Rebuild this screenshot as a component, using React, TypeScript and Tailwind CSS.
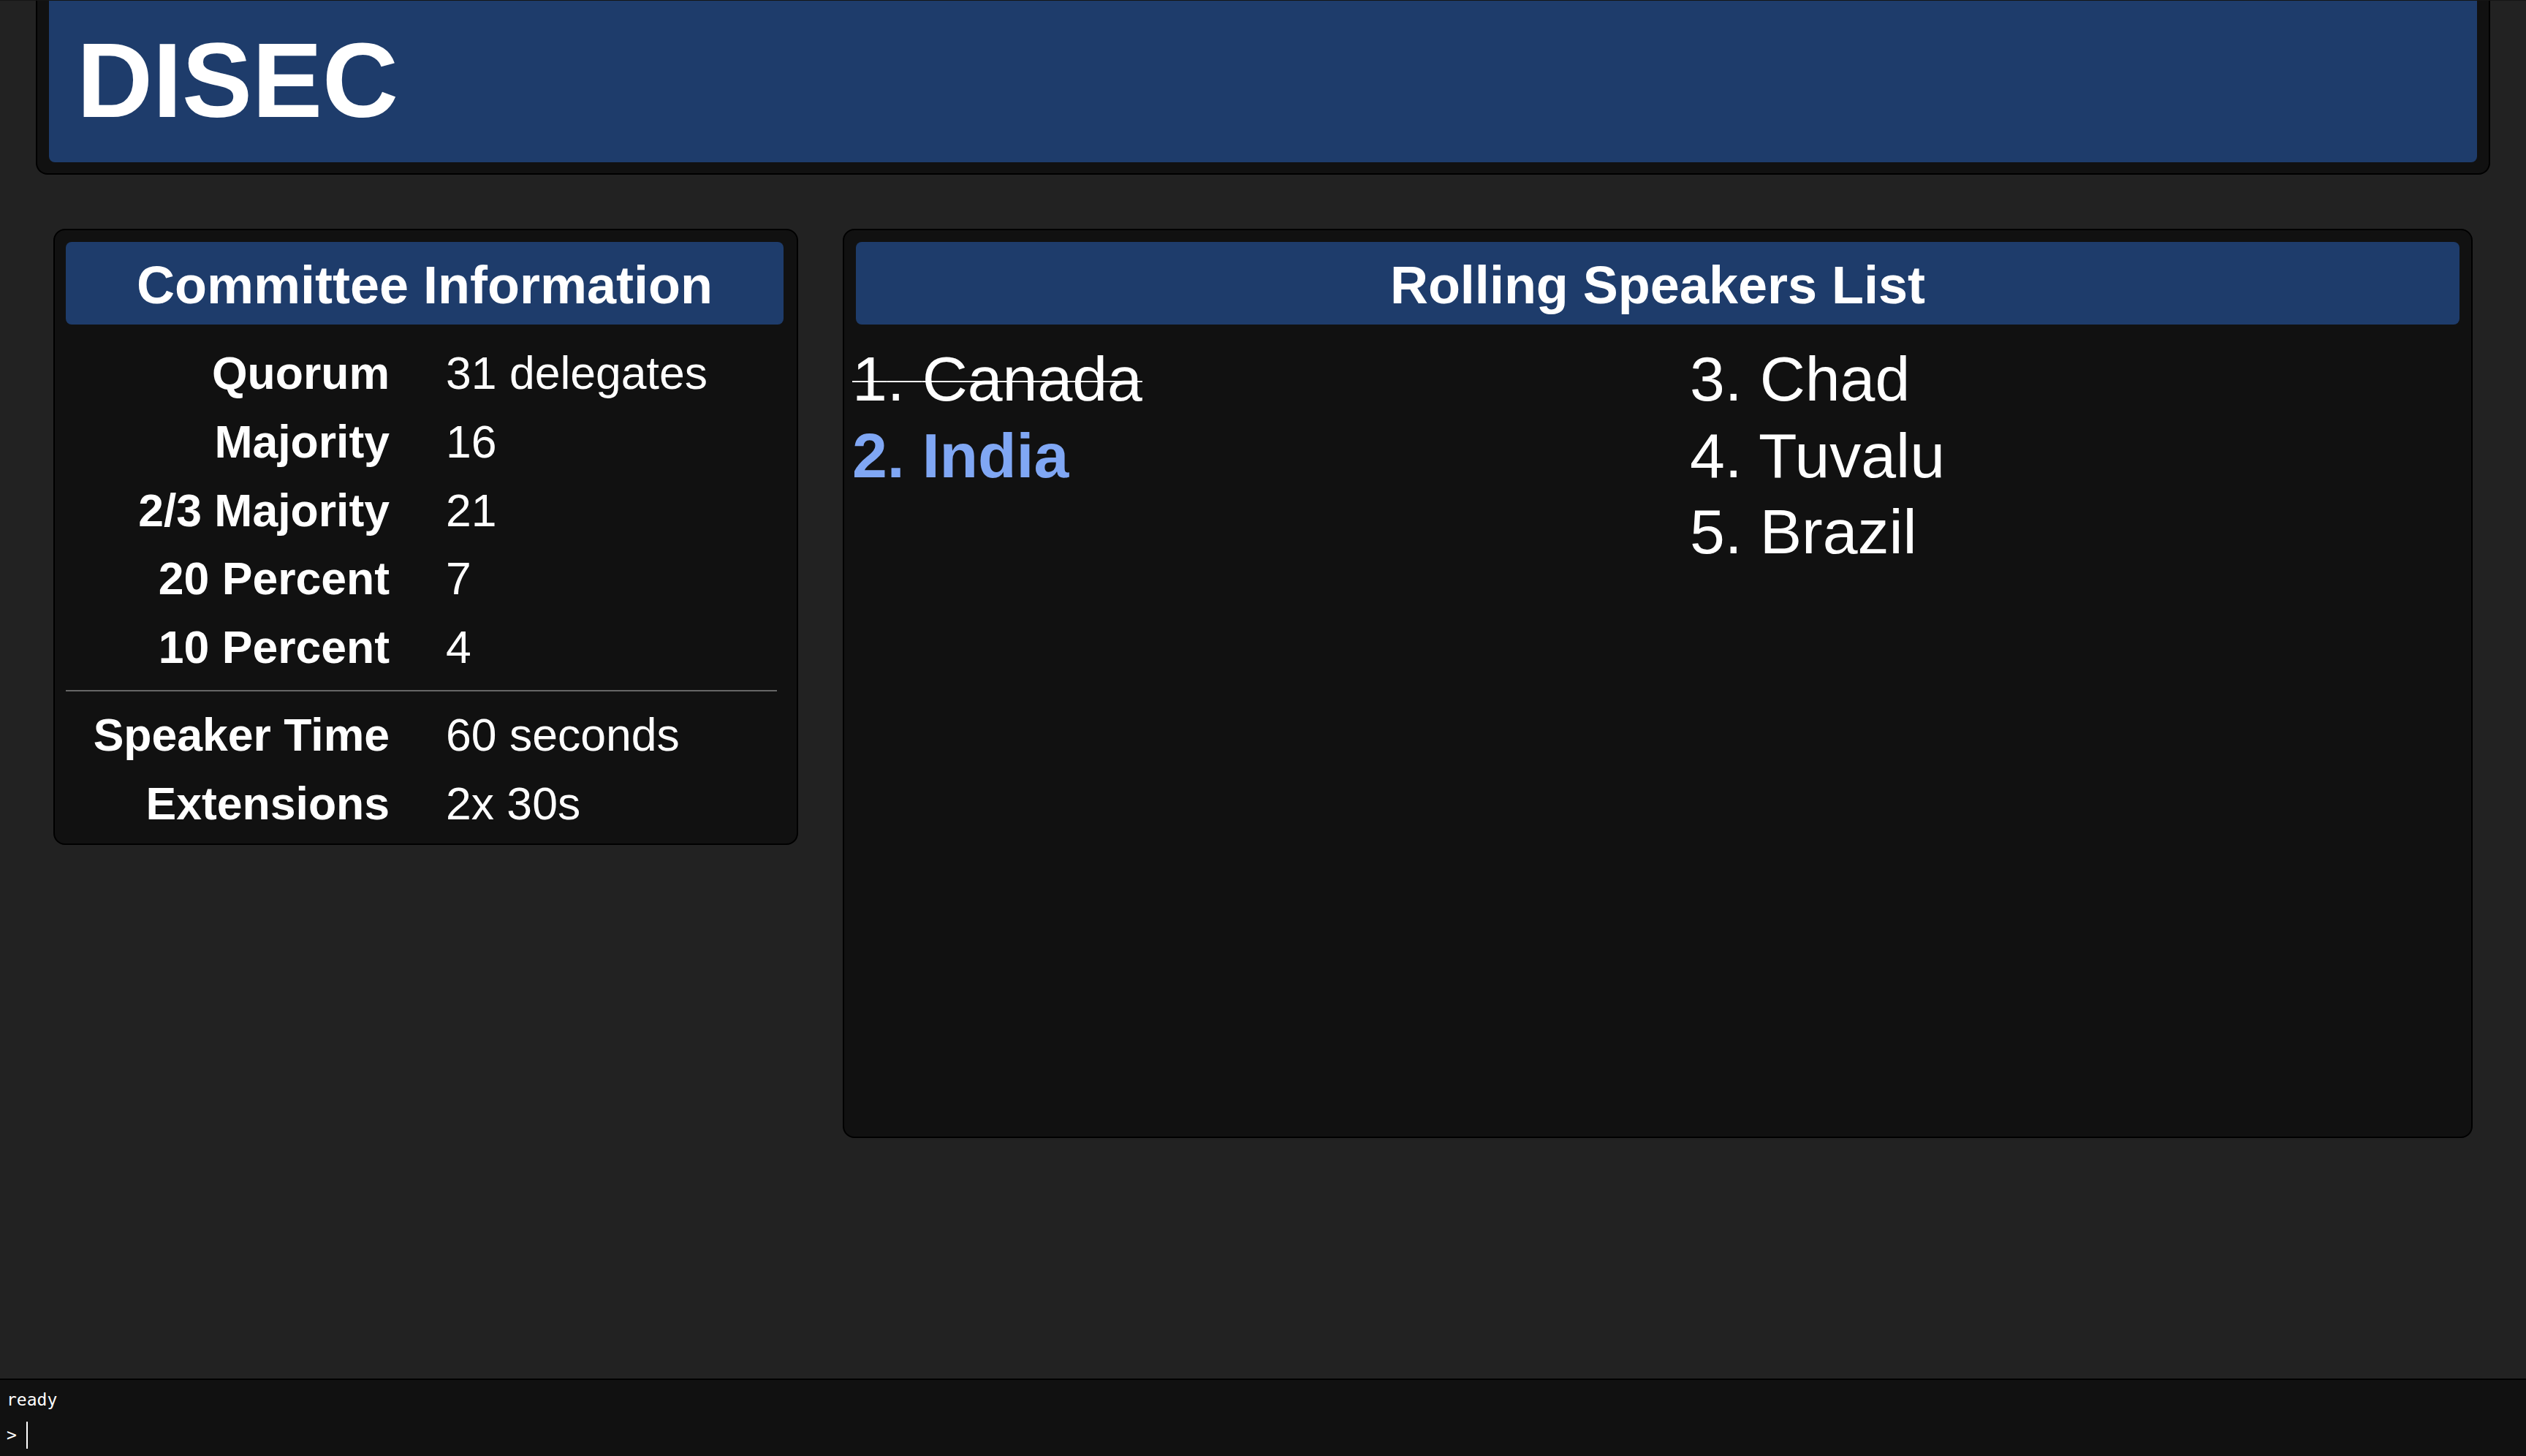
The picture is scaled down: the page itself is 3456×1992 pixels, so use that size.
import React from "react";

interface InfoRow {
  label: string;
  value: string;
}

interface Speaker {
  pos: number;
  country: string;
  status: "done" | "current" | "waiting";
}

const quorumRows: InfoRow[] = [
  { label: "Quorum", value: "31 delegates" },
  { label: "Majority", value: "16" },
  { label: "2/3 Majority", value: "21" },
  { label: "20 Percent", value: "7" },
  { label: "10 Percent", value: "4" },
];

const timeRows: InfoRow[] = [
  { label: "Speaker Time", value: "60 seconds" },
  { label: "Extensions", value: "2x 30s" },
];

const speakers: Speaker[] = [
  { pos: 1, country: "Canada", status: "done" },
  { pos: 2, country: "India", status: "current" },
  { pos: 3, country: "Chad", status: "waiting" },
  { pos: 4, country: "Tuvalu", status: "waiting" },
  { pos: 5, country: "Brazil", status: "waiting" },
];

const PanelTitle = ({ children }: { children: React.ReactNode }) => (
  <div className="bg-[#1e3c6b] rounded-lg pt-[19px] pb-[13px] text-center">
    <h2 className="text-[72px] leading-[81px] font-bold text-white">{children}</h2>
  </div>
);

const Rows = ({ rows }: { rows: InfoRow[] }) => (
  <div className="grid grid-cols-[443px_1fr] gap-x-[77px]">
    {rows.map((r) => (
      <React.Fragment key={r.label}>
        <div className="text-right font-bold text-[62.5px] leading-[93.75px] text-white whitespace-nowrap">{r.label}</div>
        <div className="text-[62.5px] leading-[93.75px] text-white whitespace-nowrap">{r.value}</div>
      </React.Fragment>
    ))}
  </div>
);

const CommitteeInfo = () => (
  <section className="w-[1019px] shrink-0 self-start bg-[#111] border-2 border-black rounded-2xl pl-[15px] pr-[18px] pt-[16px] pb-[8px]">
    <PanelTitle>Committee Information</PanelTitle>
    <div className="mt-[20px]">
      <Rows rows={quorumRows} />
    </div>
    <div className="mt-[11px] mb-[13px] h-[2px] w-[973px] bg-[#666]" />
    <Rows rows={timeRows} />
  </section>
);

const SpeakerItem = ({ s }: { s: Speaker }) => (
  <div
    className={
      s.status === "done"
        ? "text-[86px] leading-[104.5px] text-white line-through decoration-2 whitespace-nowrap"
        : s.status === "current"
        ? "text-[86px] leading-[104.5px] text-[#80a7f4] font-bold whitespace-nowrap"
        : "text-[86px] leading-[104.5px] text-white whitespace-nowrap"
    }
  >
    {s.pos}. {s.country}
  </div>
);

const SpeakersList = () => (
  <section className="flex-1 h-[1244px] bg-[#111] border-2 border-black rounded-2xl px-[16px] pt-[16px]">
    <PanelTitle>Rolling Speakers List</PanelTitle>
    <div className="mt-[22px] -ml-[5px] grid grid-cols-[1146px_1fr]">
      <div>
        {speakers.slice(0, 2).map((s) => (
          <SpeakerItem key={s.pos} s={s} />
        ))}
      </div>
      <div>
        {speakers.slice(2).map((s) => (
          <SpeakerItem key={s.pos} s={s} />
        ))}
      </div>
    </div>
  </section>
);

export default function App() {
  return (
    <div className="h-screen overflow-hidden flex flex-col bg-[#222] border-t border-[#151515] font-['Liberation_Sans',Arial,sans-serif]">
      <header className="mx-[49px] bg-[#111] border-x-2 border-b-2 border-black rounded-b-2xl px-[16px] pb-[15px]">
        <div className="bg-[#1e3c6b] rounded-b-lg pl-[38px] pt-[38px] pb-[39px]">
          <h1 className="text-[144px] leading-none font-bold text-white">DISEC</h1>
        </div>
      </header>

      <main className="flex gap-[61px] px-[73px] mt-[74px]">
        <CommitteeInfo />
        <SpeakersList />
      </main>

      <footer className="mt-auto h-[106px] bg-[#111] border-t-2 border-black pl-[9px] pt-[9px] font-['DejaVu_Sans_Mono',monospace] text-white">
        <div className="text-[23px] leading-[36px]">ready</div>
        <div className="flex items-center h-[37px] mt-[12px]">
          <span className="text-[23px] leading-none">&gt;</span>
          <span className="ml-[13px] w-[2px] h-[37px] bg-white" />
        </div>
      </footer>
    </div>
  );
}
